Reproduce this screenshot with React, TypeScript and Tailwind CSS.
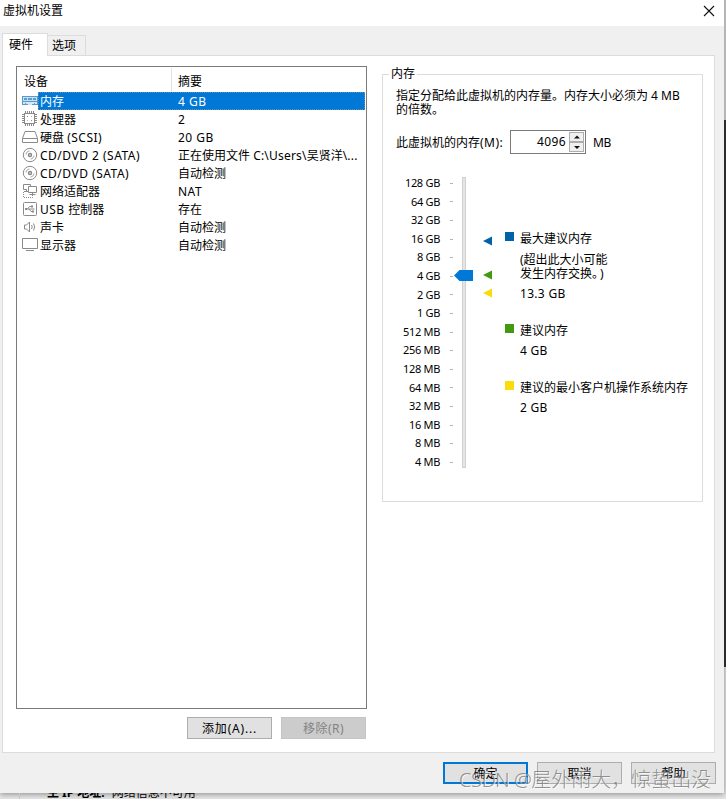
import type { ReactNode } from 'react'

interface Device {
  name: string
  summary: string
  icon: ReactNode
}

const discIcon = (
  <svg width="16" height="16" viewBox="0 0 16 16" fill="none" stroke="#8a8a8a">
    <circle cx="8" cy="8" r="6.7" />
    <circle cx="8" cy="8" r="1.5" strokeWidth="1.5" />
    <path d="M4 7.500C4.200 5.500 5.500 4.200 7.500 4M12 8.500c-.2 2-1.500 3.300-3.500 3.500" strokeWidth=".8" />
  </svg>
)

const DEVICES: Device[] = [
  {
    name: '内存',
    summary: '4 GB',
    icon: (
      <svg width="16" height="16" viewBox="0 0 16 16" shapeRendering="crispEdges">
        <path d="M0 3h16v9H0z" fill="#5d9ac8" />
        <path d="M1 4h14v4H1z" fill="#c5e2f6" />
        <path d="M2 5h3v2H2zM6 5h4v2H6zM11 5h3v2h-3z" fill="#5b9bcd" />
        <path d="M1 9h14v2h-2v-1h-1v1h-2v1H6v-1H4v-1H3v1H1z" fill="#d3e9f7" />
      </svg>
    ),
  },
  {
    name: '处理器',
    summary: '2',
    icon: (
      <svg width="16" height="16" viewBox="0 0 16 16" fill="none" stroke="#8a8a8a">
        <rect x="2.500" y="2.500" width="10" height="10" />
        {[3.5, 5.5, 7.5, 9.5, 11.5].map(p => (
          <path key={p} d={`M${p} 0v2M${p} 13v2M0 ${p}h2M13 ${p}h2`} />
        ))}
        <path d="M5 5h1v1H5zM9 9h1v1H9z" fill="#8a8a8a" stroke="none" />
        <path d="M9 5.500h1M5 9.500h1" strokeOpacity=".6" />
      </svg>
    ),
  },
  {
    name: '硬盘 (SCSI)',
    summary: '20 GB',
    icon: (
      <svg width="16" height="16" viewBox="0 0 16 16" fill="none" stroke="#8a8a8a">
        <path d="M.5 9.500 3 2.500h10l2.500 7v4H.5zM.5 9.500h15" />
      </svg>
    ),
  },
  { name: 'CD/DVD 2 (SATA)', summary: '正在使用文件 C:\\Users\\吴贤洋\\...', icon: discIcon },
  { name: 'CD/DVD (SATA)', summary: '自动检测', icon: discIcon },
  {
    name: '网络适配器',
    summary: 'NAT',
    icon: (
      <svg width="16" height="16" viewBox="0 0 16 16" fill="none" stroke="#8a8a8a">
        <path d="M5 6.500H1.500v-5h7V3M4.500 6.500v2M2 8.500h4M6.500 3.500h8v6h-8zM10.500 9.500v2M7.500 11.500h6" />
        <path d="M1.500 9v5.500h9V12" strokeDasharray="1 1" />
      </svg>
    ),
  },
  {
    name: 'USB 控制器',
    summary: '存在',
    icon: (
      <svg width="16" height="16" viewBox="0 0 16 16" fill="none" stroke="#8a8a8a">
        <rect x="1.500" y="1.500" width="13" height="13" rx="1" />
        <path d="M3 8h9.500M5.500 8 7.500 5.500h2M7 8l2 2.500h1.500" />
        <path d="M3 7h2v2H3zM9 4.500h2v2H9zM10 9.500h2v2h-2z" fill="#8a8a8a" stroke="none" />
      </svg>
    ),
  },
  {
    name: '声卡',
    summary: '自动检测',
    icon: (
      <svg width="16" height="16" viewBox="0 0 16 16" fill="none" stroke="#8a8a8a">
        <path d="M2.500 6h2l3-3v10l-3-3h-2zM9.500 6q1.500 2 0 4M11.500 4.500q2.500 3.500 0 7" />
      </svg>
    ),
  },
  {
    name: '显示器',
    summary: '自动检测',
    icon: (
      <svg width="16" height="16" viewBox="0 0 16 16" fill="none" stroke="#8a8a8a">
        <path d="M.5 1.500h15v10H.5zM4 13.500h8" />
      </svg>
    ),
  },
]

const SIZES = [
  '128 GB', '64 GB', '32 GB', '16 GB', '8 GB', '4 GB', '2 GB', '1 GB',
  '512 MB', '256 MB', '128 MB', '64 MB', '32 MB', '16 MB', '8 MB', '4 MB',
]

// latin runs are set slightly wider than the chinese text around them
function Label({ text }: { text: string }) {
  return (
    <>
      {text.split(/([\x21-\x7e][\x20-\x7e]*)/).map((part, i) =>
        i % 2 ? (
          <span key={i} className={part.includes('\\') ? 'tracking-[0.2px]' : 'tracking-[0.5px]'}>{part}</span>
        ) : part
      )}
    </>
  )
}

function DeviceList() {
  return (
    <div className="h-[643px] w-[351px] border border-[#7a7a7a] bg-white p-px">
      <div className="flex h-[24px] leading-[27px]">
        <span className="w-[153px] pl-[6px]">设备</span>
        <span className="border-l border-[#e2e2e2] pl-[6px]">摘要</span>
      </div>
      {DEVICES.map((d, i) => (
        <div key={d.name} className="flex h-[18px] items-center pl-[4px]">
          <span className="w-[16px] shrink-0">{d.icon}</span>
          <div
            className={
              i === 0
                ? 'flex h-[18px] flex-1 items-center border border-dotted border-[#6f8ca3] bg-[#0078d7] pt-[2px] text-white'
                : 'flex h-[18px] flex-1 items-center border border-transparent pt-[2px]'
            }>
            <span className="w-[138px] whitespace-nowrap pl-px"><Label text={d.name} /></span>
            <span className="whitespace-nowrap pl-px"><Label text={d.summary} /></span>
          </div>
        </div>
      ))}
    </div>
  )
}

function Legend({ swatch, label, value, note }: { swatch: string; label: string; value: string; note?: ReactNode }) {
  return (
    <div className="flex gap-[6px]">
      <span className={`mt-[2px] size-[9px] shrink-0 ${swatch}`} />
      <div className="whitespace-nowrap leading-[14px]">
        <div className="pt-[2px]">{label}</div>
        {note && <div className="mt-[7px]">{note}</div>}
        <div className="mt-[6px] tracking-[0.3px]">{value}</div>
      </div>
    </div>
  )
}

function MemorySlider() {
  return (
    <div className="flex">
      <div className="w-[57px] text-right text-[11px] tracking-[-0.3px]">
        {SIZES.map(s => (
          <div key={s} className="h-[18.6px] leading-[18.6px]">{s}</div>
        ))}
      </div>
      <div className="ml-[10px] w-[4px]">
        {SIZES.map(s => (
          <div key={s} className="flex h-[18.6px] items-center">
            <span className="h-px w-[3px] bg-[#b5b5b5]" />
          </div>
        ))}
      </div>
      <div className="relative ml-[8px] mt-[3px] h-[291px] w-[4px] border border-[#d0d0d0] bg-[#e5e5e5]">
        <svg className="absolute -left-[9px] top-[92px]" width="19" height="11" viewBox="0 0 19 11">
          <path d="M0 5.500 5.500 0H19v11H5.500z" fill="#0078d7" />
        </svg>
      </div>
      <svg className="ml-[17px] mt-[61px]" width="9" height="63" viewBox="0 0 9 63">
        <path d="M0 6 9 1.500v9z" fill="#0063a8" />
        <path d="M0 40 9 35.500v9z" fill="#429a10" />
        <path d="M0 58 9 53.500v9z" fill="#fbdc0b" />
      </svg>
    </div>
  )
}

function MemoryPanel() {
  return (
    <fieldset className="h-[436px] w-[321px] border border-[#dcdcdc]">
      <legend className="ml-[6px] px-[2px] leading-[16px]">内存</legend>
      <div className="ml-[13px] mt-[7px] whitespace-nowrap leading-[14px]">
        指定分配给此虚拟机的内存量。内存大小必须为 4 MB
        <br />
        的倍数。
      </div>
      <div className="ml-[13px] mt-[13px] flex items-center">
        <span className="w-[114px] whitespace-nowrap pt-[2px]"><Label text="此虚拟机的内存(M):" /></span>
        <div className="flex h-[24px] w-[76px] items-center justify-end border border-[#7a7a7a] bg-white pr-px">
          <span className="pb-px pr-[3px] tracking-[0.4px]">4096</span>
          <div className="flex h-[20px] w-[15px] flex-col">
            {['M3 5.500h6L6 2.500z', 'M3 3h6L6 6z'].map(d => (
              <span key={d} className="flex flex-1 items-center justify-center border border-[#adadad] bg-[#f0f0f0]">
                <svg width="12" height="8" viewBox="0 0 12 8"><path d={d} fill="#111" /></svg>
              </span>
            ))}
          </div>
        </div>
        <span className="ml-[7px] pt-px tracking-[-0.5px]">MB</span>
      </div>
      <div className="mt-[20px] flex">
        <MemorySlider />
        <div className="ml-[13px] mt-[56px] flex flex-col gap-[21px]">
          <Legend
            swatch="bg-[#0063a8]"
            label="最大建议内存"
            value="13.3 GB"
            note={<>(超出此大小可能<br />发生内存交换。<span className="pl-[2px]">)</span></>}
          />
          <Legend swatch="bg-[#429a10]" label="建议内存" value="4 GB" />
          <Legend swatch="bg-[#fbdc0b]" label="建议的最小客户机操作系统内存" value="2 GB" />
        </div>
      </div>
    </fieldset>
  )
}

const btn = 'flex h-[22px] w-[85px] items-center justify-center border pt-[2px]'

export default function App() {
  return (
    <div className="relative flex h-[799px] w-[726px] flex-col overflow-hidden bg-[#e6e6e6] font-['Noto_Sans','Noto_Sans_CJK_SC',sans-serif] text-[12px] leading-[16px] text-black">
      <div className="flex h-[793px]">
        <div className="flex w-[724px] flex-col bg-[#f0f0f0] shadow-[0_1px_6px_#888]">
          <div className="flex h-[26px] items-center justify-between bg-white pl-[3px] pr-[9px]">
            <span className="pb-[4px]">虚拟机设置</span>
            <svg className="mb-[5px]" width="12" height="12" viewBox="0 0 12 12" stroke="#111" strokeWidth="1.1">
              <path d="M1 1l10 10M11 1 1 11" />
            </svg>
          </div>
          <div className="flex h-[29px] items-end pl-[2px]">
            <div className="relative z-10 -mb-px flex h-[23px] w-[46px] items-center border border-b-0 border-[#dcdcdc] bg-white pb-px pl-[6px]">硬件</div>
            <div className="flex h-[20px] w-[38px] items-center border border-b-0 border-l-0 border-[#dcdcdc] pl-[4px] pt-px">选项</div>
          </div>
          <div className="ml-[2px] flex h-[698px] w-[713px] flex-col border border-[#dcdcdc] bg-white pl-[13px] pt-[10px]">
            <div className="flex gap-[15px]">
              <DeviceList />
              <MemoryPanel />
            </div>
            <div className="mt-[8px] flex gap-[9px] pl-[171px]">
              <button className={`${btn} border-[#adadad] bg-[#e1e1e1]`}><span className="tracking-[0.8px]">添加(A)...</span></button>
              <button className={`${btn} border-[#c4c4c4] bg-[#cccccc] text-[#838383]`}><span className="tracking-[0.5px]">移除(R)</span></button>
            </div>
          </div>
          <div className="flex gap-[9px] pl-[443px] pt-[9px]">
            <button className="flex h-[22px] w-[85px] items-center justify-center border-2 border-[#0078d7] bg-[#e1e1e1] pt-[2px]">确定</button>
            <button className={`${btn} border-[#adadad] bg-[#e1e1e1]`}>取消</button>
            <button className={`${btn} border-[#adadad] bg-[#e1e1e1]`}>帮助</button>
          </div>
        </div>
        <div className="flex w-[2px] flex-col">
          <div className="h-[120px] bg-[#b5b5b5]" />
          <div className="h-[547px] bg-[#2b2b2b]" />
        </div>
      </div>
      {/* window underneath */}
      <div className="ml-[19px] h-[6px] overflow-hidden border-l border-[#c4c4c4] pl-[27px]">
        <div className="-mt-[8px] flex gap-[7px]"><b>主 IP 地址:</b><span>网络信息不可用</span></div>
      </div>
      <div className="absolute left-[459px] top-[767px] whitespace-nowrap font-light text-[20px] leading-[26px] text-[#777]/80 [text-shadow:1px_1px_0_rgba(255,255,255,0.7)]">
        <span className="tracking-[-0.5px]">CSDN @</span>屋外雨大，惊蛰出没
      </div>
    </div>
  )
}
